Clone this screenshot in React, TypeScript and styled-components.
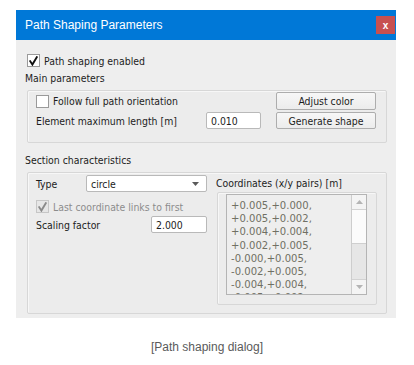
import * as React from "react";
import styled, {createGlobalStyle} from "styled-components";

const GlobalStyle = createGlobalStyle`
  body {
    margin: 0;
    background: #ffffff;
  }
`;

const ui = `"DejaVu Sans Condensed", "DejaVu Sans", "Liberation Sans", sans-serif`;

const Page = styled.div`
  width: 414px;
  height: 365px;
  padding: 10px 0 0 16px;
  box-sizing: border-box;
  font-family: ${ui};
  font-stretch: condensed;
  font-size: 10.4px;
  color: #1c1c1c;
`;

const Dialog = styled.div`
  width: 380px;
  height: 308px;
  background: #eeeeee;
  display: flex;
  flex-direction: column;
`;

const TitleBar = styled.div`
  height: 30px;
  background: #0078d7;
  display: flex;
  align-items: center;
  justify-content: space-between;
  padding: 0 1px 0 9px;
`;

const Title = styled.span`
  font-family: "Liberation Sans", sans-serif;
  font-stretch: normal;
  font-size: 12px;
  color: #ffffff;
`;

const CloseButton = styled.div`
  width: 19px;
  height: 18px;
  background: #c75050;
  color: #ffffff;
  font-family: "Liberation Sans", sans-serif;
  font-weight: bold;
  font-size: 10px;
  display: flex;
  align-items: center;
  justify-content: center;
`;

const Body = styled.div`
  padding: 14px 9px 0 11px;
  display: flex;
  flex-direction: column;
`;

const CheckRow = styled.label<{ disabled?: boolean }>`
  display: flex;
  align-items: center;
  gap: 4px;
  height: 13px;
  color: ${p => p.disabled ? "#8c8c8c" : "#1c1c1c"};
`;

const Box = styled.span<{ disabled?: boolean }>`
  width: 13px;
  height: 13px;
  box-sizing: border-box;
  border: 1px solid ${p => p.disabled ? "#c6c6c6" : "#9a9a9a"};
  background: ${p => p.disabled ? "#e6e6e6" : "#ffffff"};
  display: flex;
  align-items: center;
  justify-content: center;
`;

const SectionLabel = styled.div<{ top: number }>`
  margin: ${p => p.top}px 0 0 -2px;
  height: 13px;
  line-height: 13px;
`;

const Group = styled.div`
  border: 1px solid #d7d7d7;
  border-radius: 2px;
  box-shadow: inset 1px 1px 0 #f7f7f7;
  background: #ececec;
`;

const MainGroup = styled(Group)`
  margin-top: 5px;
  height: 53px;
  box-sizing: border-box;
  padding: 1px 10px 0 8px;
  display: grid;
  grid-template-columns: 1fr 100px;
  grid-template-rows: 18px 17px;
  row-gap: 2px;
  align-items: center;
`;

const Row = styled.div`
  display: flex;
  align-items: center;
  justify-content: space-between;
  padding-right: 15px;
`;

const Button = styled.div`
  height: 100%;
  box-sizing: border-box;
  border: 1px solid #adadad;
  border-radius: 2px;
  background: linear-gradient(#f7f7f7, #ececec);
  display: flex;
  align-items: center;
  justify-content: center;
`;

const TextInput = styled.div<{ width: number }>`
  width: ${p => p.width}px;
  height: 17px;
  box-sizing: border-box;
  border: 1px solid #b9b9b9;
  border-radius: 2px;
  background: #ffffff;
  padding-left: 4px;
  display: flex;
  align-items: center;
`;

const SectionGroup = styled(Group)`
  margin-top: 5px;
  height: 142px;
  box-sizing: border-box;
  padding: 1px 9px 0 8px;
  display: grid;
  grid-template-columns: 171px 1fr;
  column-gap: 9px;
`;

const LeftCol = styled.div`
  display: flex;
  flex-direction: column;
`;

const FieldRow = styled.div<{ top: number }>`
  margin-top: ${p => p.top}px;
  display: flex;
  align-items: center;
  justify-content: space-between;
  height: 17px;
`;

const Select = styled.div`
  width: 121px;
  height: 17px;
  box-sizing: border-box;
  border: 1px solid #b9b9b9;
  border-radius: 2px;
  background: #ffffff;
  padding: 0 7px 0 4px;
  display: flex;
  align-items: center;
  justify-content: space-between;
`;

const RightCol = styled.div`
  display: flex;
  flex-direction: column;
`;

const CoordLabel = styled.div`
  height: 18px;
  line-height: 18px;
`;

const InnerGroup = styled(Group)`
  margin-left: 1px;
  height: 113px;
  box-sizing: border-box;
  padding: 1px 9px 0 8px;
`;

const TextArea = styled.div`
  height: 101px;
  box-sizing: border-box;
  border: 1px solid #b4b4b4;
  background: #eeeeee;
  display: flex;
  overflow: hidden;
`;

const Lines = styled.div`
  flex: 1;
  padding: 4px 0 0 4px;
  font-size: 11.2px;
  line-height: 13.2px;
  color: #707064;
  white-space: pre;
  overflow: hidden;
`;

const Scrollbar = styled.div`
  width: 14px;
  border-left: 1px solid #cdcdcd;
  display: flex;
  flex-direction: column;
`;

const Arrow = styled.div`
  height: 14px;
  background: #f4f4f4;
  border-bottom: 1px solid #d2d2d2;
  display: flex;
  align-items: center;
  justify-content: center;
  &:last-child {
    border-bottom: none;
    border-top: 1px solid #d2d2d2;
  }
`;

const Thumb = styled.div`
  height: 33px;
  background: #fbfbfb;
  border-bottom: 1px solid #cfcfcf;
`;

const Track = styled.div`
  flex: 1;
  background: #e6e6e6;
`;

const Caption = styled.div`
  margin: 22px 0 0 -16px;
  width: 414px;
  text-align: center;
  font-family: "Liberation Sans", sans-serif;
  font-stretch: normal;
  font-size: 12px;
  color: #5a5a5a;
`;

const Check: React.FC<{ color: string }> = ({color}) => (
  <svg width="9" height="10" viewBox="0 0 9 10">
    <path d="M1.2 5.2 L3.4 8.6 L7.8 1.2" fill="none" stroke={color} strokeWidth="1.9" strokeLinecap="square"/>
  </svg>
);

const Triangle: React.FC<{ up?: boolean; color: string }> = ({up, color}) => (
  <svg width="7" height="4" viewBox="0 0 7 4">
    <path d={up ? "M0 4 L3.5 0 L7 4 Z" : "M0 0 L7 0 L3.5 4 Z"} fill={color}/>
  </svg>
);

const coords = [
  "+0.005,+0.000,",
  "+0.005,+0.002,",
  "+0.004,+0.004,",
  "+0.002,+0.005,",
  "-0.000,+0.005,",
  "-0.002,+0.005,",
  "-0.004,+0.004,",
  "-0.005,+0.002,",
];

export default function App() {
  return (
    <Page>
      <GlobalStyle/>
      <Dialog>
        <TitleBar>
          <Title>Path Shaping Parameters</Title>
          <CloseButton>x</CloseButton>
        </TitleBar>
        <Body>
          <CheckRow>
            <Box><Check color="#111"/></Box>
            Path shaping enabled
          </CheckRow>
          <SectionLabel top={5}>Main parameters</SectionLabel>
          <MainGroup>
            <CheckRow>
              <Box/>
              Follow full path orientation
            </CheckRow>
            <Button>Adjust color</Button>
            <Row>
              <span>Element maximum length [m]</span>
              <TextInput width={55}>0.010</TextInput>
            </Row>
            <Button>Generate shape</Button>
          </MainGroup>
          <SectionLabel top={11}>Section characteristics</SectionLabel>
          <SectionGroup>
            <LeftCol>
              <FieldRow top={1}>
                <span>Type</span>
                <Select>circle<Triangle color="#5a5a5a"/></Select>
              </FieldRow>
              <FieldRow top={6}>
                <CheckRow disabled>
                  <Box disabled><Check color="#8a8a8a"/></Box>
                  Last coordinate links to first
                </CheckRow>
              </FieldRow>
              <FieldRow top={1}>
                <span>Scaling factor</span>
                <TextInput width={56}>2.000</TextInput>
              </FieldRow>
            </LeftCol>
            <RightCol>
              <CoordLabel>Coordinates (x/y pairs) [m]</CoordLabel>
              <InnerGroup>
                <TextArea>
                  <Lines>{coords.join("\n")}</Lines>
                  <Scrollbar>
                    <Arrow><Triangle up color="#b4b4b4"/></Arrow>
                    <Thumb/>
                    <Track/>
                    <Arrow><Triangle color="#b4b4b4"/></Arrow>
                  </Scrollbar>
                </TextArea>
              </InnerGroup>
            </RightCol>
          </SectionGroup>
        </Body>
      </Dialog>
      <Caption>[Path shaping dialog]</Caption>
    </Page>
  );
}
